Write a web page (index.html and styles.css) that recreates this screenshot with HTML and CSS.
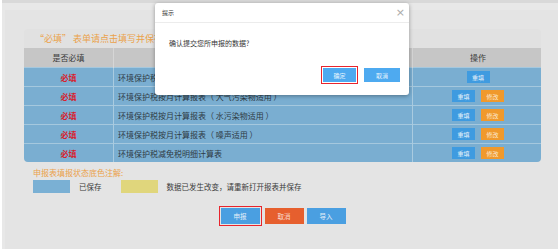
FILE: index.html
```html
<!DOCTYPE html>
<html lang="zh-CN">
<head>
  <meta charset="UTF-8" />
  <title>申报</title>
  <link rel="stylesheet" href="styles.css">
</head>
<body>
  <div class="page">
    <div class="content">
      <div class="panel">
        <div class="panel-head">“必填” 表单请点击填写并保存；</div>
        <table class="report-table">
          <thead>
            <tr>
              <th class="col-need">是否必填</th>
              <th class="col-name"></th>
              <th class="col-op">操作</th>
            </tr>
          </thead>
          <tbody>
            <tr>
              <td class="need">必填</td>
              <td>环境保护税按</td>
              <td class="ops"><button class="mini blue">重填</button></td>
            </tr>
            <tr>
              <td class="need">必填</td>
              <td>环境保护税按月计算报表（ 大气污染物适用 ）</td>
              <td class="ops"><button class="mini blue">重填</button><button class="mini orange">修改</button></td>
            </tr>
            <tr>
              <td class="need">必填</td>
              <td>环境保护税按月计算报表（ 水污染物适用 ）</td>
              <td class="ops"><button class="mini blue">重填</button><button class="mini orange">修改</button></td>
            </tr>
            <tr>
              <td class="need">必填</td>
              <td>环境保护税按月计算报表（ 噪声适用 ）</td>
              <td class="ops"><button class="mini blue">重填</button><button class="mini orange">修改</button></td>
            </tr>
            <tr>
              <td class="need">必填</td>
              <td>环境保护税减免税明细计算表</td>
              <td class="ops"><button class="mini blue">重填</button><button class="mini orange">修改</button></td>
            </tr>
          </tbody>
        </table>
      </div>

      <div class="legend">
        <div class="legend-title">申报表填报状态底色注解:</div>
        <div class="legend-row">
          <span class="swatch saved"></span>
          <span class="legend-text">已保存</span>
          <span class="swatch changed"></span>
          <span class="legend-text">数据已发生改变，请重新打开报表并保存</span>
        </div>
      </div>

      <div class="actions">
        <span class="focus-ring"><button class="btn blue">申报</button></span>
        <button class="btn red">取消</button>
        <button class="btn blue">导入</button>
      </div>
    </div>
  </div>

  <div class="modal">
    <div class="modal-head">
      <span class="modal-title">提示</span>
      <span class="modal-close">&times;</span>
    </div>
    <div class="modal-body">确认提交您所申报的数据?</div>
    <div class="modal-foot">
      <span class="focus-ring"><button class="dlg-btn">确定</button></span>
      <button class="dlg-btn">取消</button>
    </div>
  </div>
</body>
</html>
```

FILE: styles.css
```css
body {
  margin: 0;
  width: 558px;
  height: 252px;
  background: #ffffff;
  font-family: "Noto Sans CJK SC", "Noto Sans", sans-serif;
  position: relative;
  overflow: hidden;
}
.page {
  margin-left: 2px;
  height: 246px;
  background: #e8e8e8;
  border-top: 3px solid #d9d9d9;
}
.content {
  margin-left: 3px;
  margin-top: 7px;
  height: 239px;
  background: #e4e4e4;
  padding: 19px 17px 0 19px;
  box-sizing: border-box;
}
.panel {
  width: 517px;
  border-radius: 4px;
  overflow: hidden;
  background: #e1e1e1;
}
.panel-head {
  height: 19px;
  line-height: 19px;
  padding-left: 11px;
  font-size: 9px;
  color: #eba24a;
  white-space: nowrap;
  overflow: hidden;
}
.report-table {
  width: 517px;
  border-collapse: collapse;
  table-layout: fixed;
  font-size: 8px;
}
.report-table th {
  height: 19px;
  padding: 0;
  background: #c6c6c6;
  color: #3a3a3a;
  font-weight: normal;
  border-right: 1px solid #d6d6d6;
}
.report-table th:last-child,
.report-table td:last-child {
  border-right: none;
}
.col-need { width: 89px; }
.col-name { width: 298px; }
.col-op { width: 130px; }
.report-table td {
  height: 18px;
  padding: 0 0 0 4px;
  background: #7aaed1;
  color: #2e3a44;
  border-top: 1px solid #a5c8de;
  border-right: 1px solid #a9cbe0;
  white-space: nowrap;
}
.report-table td.need {
  padding: 0;
  text-align: center;
  color: #d8202c;
  font-weight: bold;
}
.report-table td.ops {
  padding: 0;
  text-align: center;
  font-size: 0;
}
.mini {
  width: 23px;
  height: 12px;
  padding: 0;
  border: none;
  font-family: inherit;
  font-size: 6px;
  color: #e8f2fa;
  vertical-align: middle;
}
.mini + .mini {
  margin-left: 6px;
}
.mini.blue { background: #3f9be0; }
.mini.orange { background: #f0992c; color: #fbe7cc; }

.legend {
  padding: 5px 0 0 9px;
}
.legend-title {
  font-size: 8px;
  line-height: 12px;
  color: #eba24a;
}
.legend-row {
  display: flex;
  align-items: center;
  margin-top: 1px;
}
.swatch {
  width: 37px;
  height: 13px;
}
.swatch.saved { background: #7ab0d4; }
.swatch.changed { background: #e0d67c; }
.legend-text {
  font-size: 7.5px;
  color: #3a3a3a;
  margin-left: 9px;
  margin-right: 19px;
}

.actions {
  display: flex;
  justify-content: center;
  align-items: center;
  gap: 3px;
  margin-top: 13px;
  padding-right: 1px;
}
.focus-ring {
  display: inline-flex;
  padding: 1px;
  border: 1px solid #e8242c;
}
.btn {
  width: 39px;
  height: 16px;
  padding: 0;
  border: none;
  font-family: inherit;
  font-size: 6.5px;
  color: #e6f0f8;
}
.btn.blue { background: #4a9fe1; }
.btn.red { background: #e65f2e; color: #f8ddd2; }

.modal {
  position: absolute;
  left: 155px;
  top: 3px;
  width: 254px;
  height: 92px;
  background: #ffffff;
  border-radius: 3px;
  box-shadow: 0 1px 4px rgba(0, 0, 0, 0.35);
  display: flex;
  flex-direction: column;
}
.modal-head {
  height: 19px;
  border-bottom: 1px solid #ececec;
  display: flex;
  align-items: center;
  justify-content: space-between;
  padding: 0 4px 0 7px;
}
.modal-title {
  font-size: 6px;
  color: #333;
}
.modal-close {
  font-family: "DejaVu Sans", sans-serif;
  font-size: 11px;
  color: #aaaaaa;
  line-height: 1;
}
.modal-body {
  padding: 15px 0 0 14px;
  font-size: 7px;
  color: #333;
  height: 28px;
}
.modal-foot {
  display: flex;
  justify-content: flex-end;
  align-items: center;
  gap: 6px;
  padding-right: 9px;
}
.dlg-btn {
  width: 36px;
  height: 14px;
  padding: 0;
  border: none;
  background: #4eaaf0;
  color: #e8f4fd;
  font-family: inherit;
  font-size: 6px;
}
.focus-ring .dlg-btn {
  width: 33px;
}
```
